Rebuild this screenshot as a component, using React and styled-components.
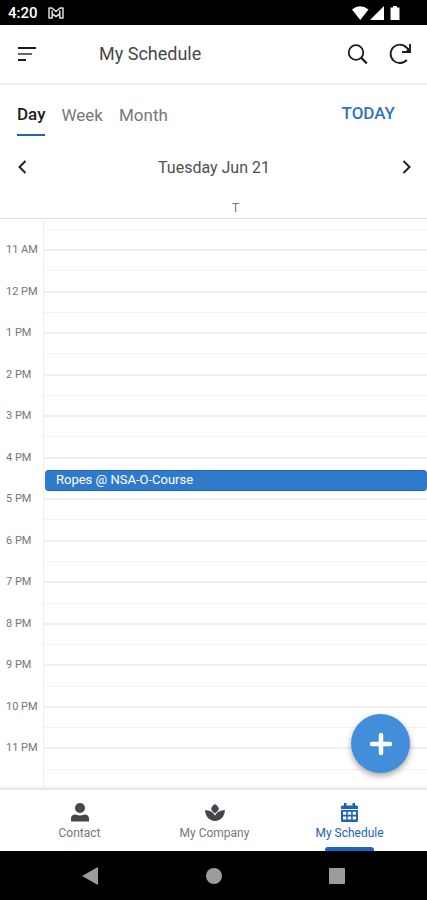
import React from "react";
import styled, { createGlobalStyle } from "styled-components";

const GlobalStyle = createGlobalStyle`
  * { box-sizing: border-box; }
  body { margin: 0; background: #fff; font-family: Roboto, "Liberation Sans", sans-serif; }
  button { font: inherit; color: inherit; background: none; border: 0; padding: 0; cursor: pointer; }
  svg { display: block; }
`;

const Screen = styled.div`
  display: flex;
  flex-direction: column;
  min-height: 100vh;
  color: #444;
`;

const StatusBar = styled.div`
  display: flex;
  align-items: center;
  height: 25px;
  padding: 0 27px 0 8px;
  background: #000;
  color: #fff;
  font-size: 15px;
  font-weight: 500;
`;

const StatusIcons = styled.div`
  display: flex;
  margin-left: ${(p) => (p.$end ? "auto" : "10px")};
`;

const AppBar = styled.header`
  display: flex;
  align-items: center;
  height: 60px;
  padding: 0 15px;
  border-bottom: 2px solid #ececec;
  color: #1c1c1c;
`;

const Title = styled.h1`
  flex: 1;
  margin: 0 0 0 60px;
  color: #484848;
  font-size: 18px;
  font-weight: 400;
  line-height: 24px;
`;

const IconButton = styled.button`
  display: grid;
  place-items: center;
  width: 24px;
  height: 24px;
`;

const Actions = styled.div`
  display: flex;
  gap: 19px;
`;

const ViewBar = styled.div`
  display: flex;
  align-items: flex-start;
  height: 60px;
  padding: 18px 32px 0 17px;
`;

const Tabs = styled.div`
  display: flex;
  gap: 16px;
`;

const Tab = styled.button`
  height: 33px;
  padding: ${(p) => (p.$active ? "0 0 10px" : "2px 0 11px")};
  border-bottom: ${(p) => (p.$active ? "2px solid #1f63ba" : "0")};
  color: ${(p) => (p.$active ? "#222" : "#777")};
  font-size: 17px;
  font-weight: ${(p) => (p.$active ? 500 : 400)};
  line-height: 20px;
`;

const TodayButton = styled.button`
  margin-left: auto;
  color: #2e74c6;
  font-size: 17px;
  font-weight: 500;
  line-height: 20px;
`;

const DateBar = styled.div`
  display: flex;
  align-items: center;
  justify-content: space-between;
  height: 44px;
  padding: 0 9px 0 10px;
  color: #222;
`;

const DateText = styled.h2`
  margin: 0;
  color: #505050;
  font-size: 16px;
  font-weight: 400;
`;

const WeekdayHeader = styled.div`
  height: 30px;
  padding: 11px 0 0 44px;
  border-bottom: 1px solid #dcdcdc;
  color: #777;
  font-size: 12px;
  line-height: 16px;
  text-align: center;
`;

const Calendar = styled.main`
  position: relative;
  display: flex;
  flex: 1;
  flex-direction: column;
`;

const LeadRow = styled.div`
  height: 30px;
  margin-left: 43px;
  padding-top: 10px;
  border-left: 1px solid #efefef;
  &::before { content: ""; display: block; border-top: 1px solid #f3f3f3; }
`;

const HourRow = styled.div`
  display: flex;
  flex: 1 0 40px;
`;

const HourLabel = styled.div`
  width: 43px;
  margin-top: -7px;
  padding-left: 6px;
  color: #757575;
  font-size: 11px;
  line-height: 16px;
  white-space: nowrap;
`;

const HourCell = styled.div`
  position: relative;
  display: flex;
  flex: 1;
  flex-direction: column;
  border-left: 1px solid #efefef;
`;

const HalfHour = styled.div`
  flex: 1;
  border-top: ${(p) => (p.$first ? "2px solid #f0f0f0" : "1px solid #f3f3f3")};
`;

const EventBlock = styled.button`
  position: absolute;
  top: 32%;
  right: 0;
  left: 1px;
  height: 50%;
  overflow: hidden;
  padding: 0 11px;
  border: solid #1c64b8;
  border-width: 1px 0;
  border-radius: 4px;
  background: #2f7acb;
  color: #fff;
  font-size: 13px;
  line-height: 18px;
  text-align: left;
`;

const AddButton = styled.button`
  position: absolute;
  right: 17px;
  bottom: 16px;
  display: grid;
  place-items: center;
  width: 59px;
  height: 59px;
  border-radius: 50%;
  background: #428edb;
  box-shadow: 0 3px 6px rgba(0, 0, 0, 0.35);
  color: #fff;
`;

const BottomNav = styled.nav`
  position: relative;
  display: flex;
  height: 62px;
  padding: 0 10px 0 12px;
  border-top: 1px solid #e4e4e4;
  background: #fff;
  box-shadow: 0 -1px 3px rgba(0, 0, 0, 0.14);
`;

const NavItem = styled.button`
  position: relative;
  display: flex;
  flex: 1;
  flex-direction: column;
  align-items: center;
  gap: 4px;
  padding-top: 13px;
  color: ${(p) => (p.$active ? "#1f63ba" : "#777")};
  font-size: 12px;
  line-height: 14px;
`;

const NavIcon = styled.span`
  display: grid;
  place-items: center;
  height: 19px;
  color: ${(p) => (p.$active ? "#1b62b8" : "#43474c")};
`;

const ActiveMark = styled.span`
  position: absolute;
  bottom: 0;
  width: 49px;
  height: 4px;
  border-radius: 3px 3px 0 0;
  background: #1b67bd;
`;

const SystemBar = styled.div`
  display: flex;
  align-items: center;
  height: 49px;
  padding: 0 28px;
  background: #000;
  color: #9c9c9c;
`;

const SystemButton = styled.button`
  display: grid;
  flex: 1;
  place-items: center;
  height: 100%;
`;

const hours = ["11 AM", "12 PM", "1 PM", "2 PM", "3 PM", "4 PM", "5 PM", "6 PM", "7 PM", "8 PM", "9 PM", "10 PM", "11 PM"];

const MailIcon = () => (
  <svg width="16" height="12" viewBox="0 0 16 12" fill="none" stroke="#ddd" strokeWidth="1.5" strokeLinejoin="round">
    <path d="M1 1h3l4 3.5L12 1h3v10h-3.2V7L8 9.5 4.2 7v4H1z" />
    <path d="M4.2 3.5V7M11.8 3.5V7" />
  </svg>
);

const SignalIcons = () => (
  <svg width="48" height="14" viewBox="0 0 48 14" fill="#fff">
    <path d="M0 3.4Q8 -3 16.5 3.4L8.3 14z" />
    <path d="M18 14 32 0v14z" />
    <path d="M41 0h4v1.5h2.500V14h-9V1.500H41z" />
  </svg>
);

const MenuIcon = () => (
  <svg width="24" height="24" viewBox="0 0 24 24" stroke="currentColor" strokeWidth="2">
    <path d="M3 6h18M3 18h8" />
    <path d="M3 12h14" stroke="#666" />
  </svg>
);

const SearchIcon = () => (
  <svg width="24" height="24" viewBox="0 0 24 24" fill="none" stroke="currentColor" strokeWidth="1.8">
    <circle cx="11" cy="10.500" r="7.300" />
    <path d="m16.200 15.800 5.600 5.600" strokeWidth="2.200" />
  </svg>
);

const RefreshIcon = () => (
  <svg width="24" height="24" viewBox="0 0 24 24" fill="none" stroke="currentColor" strokeWidth="1.9">
    <path d="M18.800 17.800A9.200 9.200 0 1 1 18.500 5.500l2.500 2.500" />
    <path d="M22 2v8h-8" />
    <path d="M22 5v5h-5z" fill="currentColor" stroke="none" />
  </svg>
);

const Chevron = ({ d }) => (
  <svg width="24" height="24" viewBox="0 0 24 24" fill="none" stroke="currentColor" strokeWidth="2">
    <path d={d} />
  </svg>
);

const PersonIcon = () => (
  <svg width="18" height="19" viewBox="0 0 18 19" fill="currentColor">
    <circle cx="9" cy="5" r="5" />
    <path d="M0 18.500v-3C0 13 2 11.500 4.500 11.500q4.500 1.800 9 0C16 11.500 18 13 18 15.500v3z" />
  </svg>
);

const LotusIcon = () => (
  <svg width="20" height="18" viewBox="0 0 20 18" fill="currentColor">
    <path d="M10 0c2.400 1.800 3.800 3.400 3.800 4.800C13.800 6.400 12 8 10 9.600 8 8 6.200 6.400 6.200 4.800 6.200 3.400 7.600 1.800 10 0z" />
    <path d="M0 6.300c4.500 0 8.300 1.600 10 5.500 1.700-3.900 5.500-5.500 10-5.500-.6 6.400-4 10.400-10 10.700C4 16.700.6 12.700 0 6.300z" />
  </svg>
);

const CalendarIcon = () => (
  <svg width="17" height="19" viewBox="0 0 17 19" fill="currentColor">
    <path d="M3 0h2.500v2.500h6V0H14v2.500h1.500Q17 2.500 17 4v2H0V4q0-1.500 1.500-1.500H3z" />
    <path fillRule="evenodd" d="M0 7h17v10.500q0 1.500-1.500 1.500h-14Q0 19 0 17.500zM2 8.800v3h3.300v-3zm4.800 0v3h3.400v-3zm4.900 0v3H15v-3zM2 13.500v3h3.300v-3zm4.800 0v3h3.400v-3zm4.900 0v3H15v-3z" />
  </svg>
);

export default function App() {
  return (
    <Screen>
      <GlobalStyle />
      <StatusBar>
        4:20
        <StatusIcons><MailIcon /></StatusIcons>
        <StatusIcons $end><SignalIcons /></StatusIcons>
      </StatusBar>
      <AppBar>
        <IconButton aria-label="Menu"><MenuIcon /></IconButton>
        <Title>My Schedule</Title>
        <Actions>
          <IconButton aria-label="Search"><SearchIcon /></IconButton>
          <IconButton aria-label="Refresh"><RefreshIcon /></IconButton>
        </Actions>
      </AppBar>
      <ViewBar>
        <Tabs>
          <Tab $active>Day</Tab>
          <Tab>Week</Tab>
          <Tab>Month</Tab>
        </Tabs>
        <TodayButton>TODAY</TodayButton>
      </ViewBar>
      <DateBar>
        <IconButton aria-label="Previous day"><Chevron d="M15.500 6 9.500 12l6 6" /></IconButton>
        <DateText>Tuesday Jun 21</DateText>
        <IconButton aria-label="Next day"><Chevron d="m9.500 6 6 6-6 6" /></IconButton>
      </DateBar>
      <WeekdayHeader>T</WeekdayHeader>
      <Calendar>
        <LeadRow />
        {hours.map((hour) => (
          <HourRow key={hour}>
            <HourLabel>{hour}</HourLabel>
            <HourCell>
              <HalfHour $first />
              <HalfHour />
              {hour === "4 PM" && <EventBlock>Ropes @ NSA-O-Course</EventBlock>}
            </HourCell>
          </HourRow>
        ))}
        <AddButton aria-label="Add event">
          <svg width="24" height="24" viewBox="0 0 24 24" stroke="currentColor" strokeWidth="4.500" strokeLinecap="round">
            <path d="M12 3v18M3 12h18" />
          </svg>
        </AddButton>
      </Calendar>
      <BottomNav>
        <NavItem>
          <NavIcon><PersonIcon /></NavIcon>
          Contact
        </NavItem>
        <NavItem>
          <NavIcon><LotusIcon /></NavIcon>
          My Company
        </NavItem>
        <NavItem $active>
          <NavIcon $active><CalendarIcon /></NavIcon>
          My Schedule
          <ActiveMark />
        </NavItem>
      </BottomNav>
      <SystemBar>
        <SystemButton aria-label="Back">
          <svg width="16" height="18" viewBox="0 0 16 18" fill="currentColor"><path d="M16 0v18L0 9z" /></svg>
        </SystemButton>
        <SystemButton aria-label="Home">
          <svg width="16" height="16" viewBox="0 0 16 16" fill="currentColor"><circle cx="8" cy="8" r="8" /></svg>
        </SystemButton>
        <SystemButton aria-label="Recent apps">
          <svg width="16" height="16" viewBox="0 0 16 16" fill="currentColor"><rect width="16" height="16" rx="1" /></svg>
        </SystemButton>
      </SystemBar>
    </Screen>
  );
}
